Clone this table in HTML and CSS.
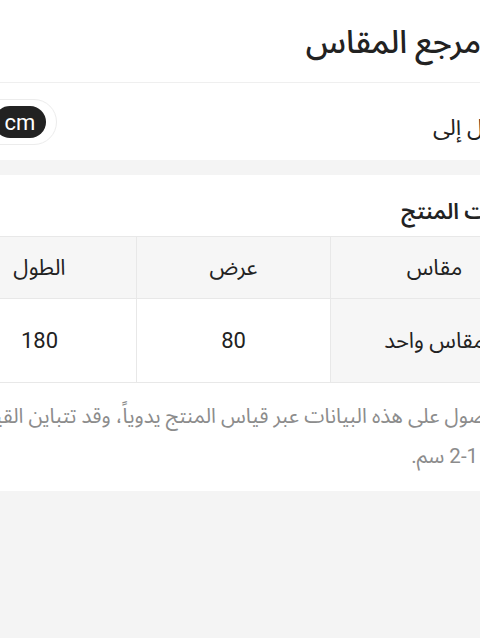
FILE: index.html
```html
<!DOCTYPE html>
<html lang="ar" dir="rtl">
<head>
<meta charset="utf-8">
<title>مرجع المقاس</title>
<link rel="stylesheet" href="styles.css">
</head>
<body>
<div class="page">
  <header class="head">
    <h1 class="title">مرجع المقاس</h1>
  </header>
  <div class="convert">
    <span class="convert-label">تحويل إلى</span>
    <div class="toggle">
      <span class="seg seg-on">cm</span>
      <span class="seg">inch</span>
    </div>
  </div>
  <section class="panel">
    <h2 class="subtitle">قياسات المنتج</h2>
    <table class="sizes">
      <colgroup>
        <col class="c-size">
        <col class="c-mid">
        <col class="c-mid">
      </colgroup>
      <thead>
        <tr><th>مقاس</th><th>عرض</th><th>الطول</th></tr>
      </thead>
      <tbody>
        <tr><td class="first">مقاس واحد</td><td>80</td><td>180</td></tr>
      </tbody>
    </table>
    <p class="note">تم الحصول على هذه البيانات عبر قياس المنتج يدوياً، وقد تتباين القياسات<br>بمقدار 1-2 سم.</p>
  </section>
</div>
</body>
</html>
```
FILE: styles.css
```css
html, body {
  margin: 0;
  padding: 0;
}
body {
  background: #f4f4f4;
  overflow: hidden;
  width: 480px;
  height: 638px;
  font-family: Roboto, "Noto Sans Arabic", "Noto Naskh Arabic", "DejaVu Sans", sans-serif;
  color: #222;
}
.page {
  width: 628px;
  margin-right: -75px;
  direction: rtl;
}
.head {
  background: #fff;
  height: 82px;
  border-bottom: 1px solid #efefef;
  display: flex;
  align-items: center;
  padding-right: 74px;
}
.title {
  margin: 0;
  font-size: 32px;
  font-weight: 500;
  line-height: 1;
  padding-top: 2px;
}
.convert {
  background: #fff;
  height: 77px;
  display: flex;
  align-items: center;
  justify-content: space-between;
  padding-right: 32px;
  padding-left: 4px;
}
.convert-label {
  font-size: 23px;
  padding-top: 12px;
}
.toggle {
  display: flex;
  direction: rtl;
  padding: 6px 10px;
  border: 1px solid #ececec;
  border-radius: 24px;
  background: #fff;
  margin-top: 1px;
}
.seg {
  width: 52px;
  height: 32px;
  border-radius: 16px;
  display: flex;
  align-items: center;
  justify-content: center;
  font-size: 22px;
  direction: ltr;
  color: #222;
}
.seg-on {
  background: #222;
  color: #fff;
}
.panel {
  background: #fff;
  margin-top: 15px;
  padding: 22px 16px 15px;
}
.subtitle {
  margin: 0 0 9px 0;
  font-size: 22px;
  font-weight: 600;
  line-height: 30px;
}
.sizes {
  width: 100%;
  border-collapse: collapse;
  table-layout: fixed;
  font-size: 22px;
}
.c-size { width: 208px; }
.c-mid { width: 194px; }
.sizes th, .sizes td {
  border: 1px solid #e8e8e8;
  text-align: center;
  padding: 0;
  font-weight: 400;
}
.sizes th {
  background: #f6f6f6;
  height: 61px;
}
.sizes td {
  height: 83px;
  background: #fff;
}
.sizes td.first {
  background: #f6f6f6;
}
.note {
  margin: 13px 5px 0 -60px;
  font-size: 20.5px;
  line-height: 40px;
  color: #8c8c8c;
  white-space: nowrap;
}
```
